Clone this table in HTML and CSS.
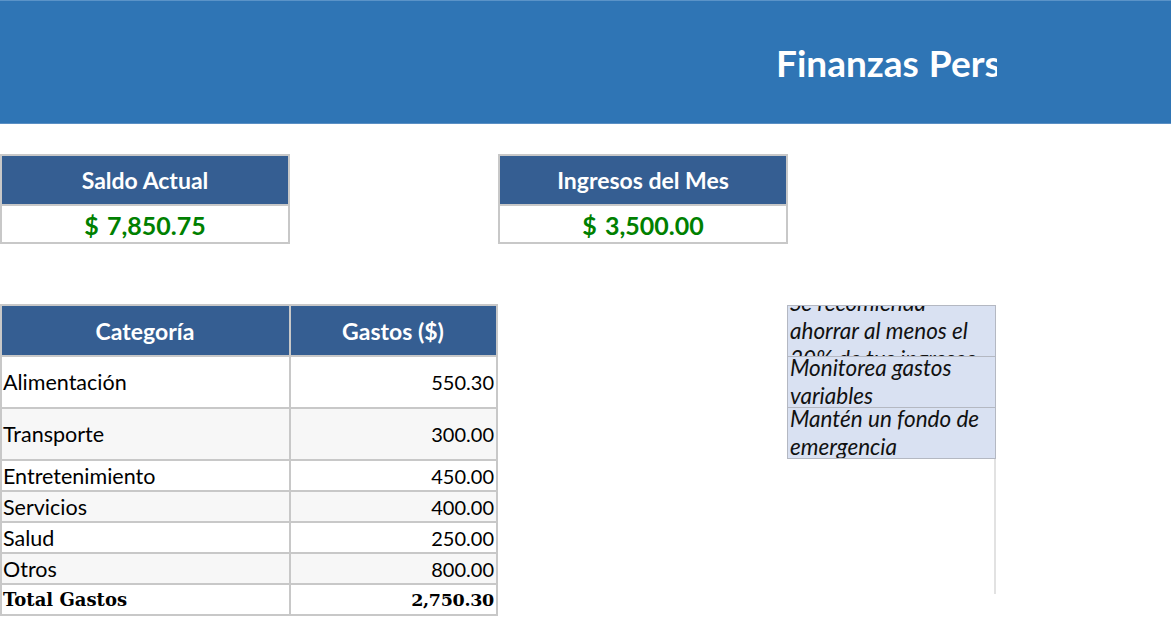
FILE: index.html
```html
<!DOCTYPE html>
<html lang="es">
<head>
<meta charset="utf-8">
<title>Finanzas Personales</title>
<link rel="stylesheet" href="styles.css">
</head>
<body>
<header class="banner">
  <div class="title-cell"><h1 class="title">Finanzas Personales</h1></div>
</header>

<section class="kpis">
  <div class="kpi">
    <div class="kpi-head">Saldo Actual</div>
    <div class="kpi-value">$ 7,850.75</div>
  </div>
  <div class="kpi">
    <div class="kpi-head">Ingresos del Mes</div>
    <div class="kpi-value">$ 3,500.00</div>
  </div>
</section>

<section class="lower">
  <table class="expenses">
    <thead>
      <tr><th class="col-cat">Categoría</th><th class="col-amt">Gastos ($)</th></tr>
    </thead>
    <tbody>
      <tr class="tall"><td>Alimentación</td><td class="num">550.30</td></tr>
      <tr class="tall alt"><td>Transporte</td><td class="num">300.00</td></tr>
      <tr><td>Entretenimiento</td><td class="num">450.00</td></tr>
      <tr class="alt"><td>Servicios</td><td class="num">400.00</td></tr>
      <tr><td>Salud</td><td class="num">250.00</td></tr>
      <tr class="alt"><td>Otros</td><td class="num">800.00</td></tr>
      <tr class="total"><td>Total Gastos</td><td class="num">2,750.30</td></tr>
    </tbody>
  </table>

  <div class="tips-col">
    <div class="tips">
      <div class="tip"><span>Se recomienda ahorrar al menos el 20% de tus ingresos</span></div>
      <div class="tip"><span>Monitorea gastos variables</span></div>
      <div class="tip"><span>Mantén un fondo de emergencia</span></div>
    </div>
    <div class="tips-rest"></div>
  </div>
</section>
</body>
</html>
```

FILE: styles.css
```css
* { box-sizing: border-box; }

html, body {
  margin: 0;
  padding: 0;
  background: #ffffff;
  width: 1171px;
  height: 617px;
  overflow: hidden;
  font-family: Lato, "Open Sans", sans-serif;
  color: #000;
}

.banner {
  height: 124px;
  background: #2f75b5;
  border-top: 1px solid #5a93c8;
  border-bottom: 1px solid #5a8fc4;
}

.title-cell {
  width: 997px;
  height: 100%;
  overflow: hidden;
  padding-left: 776px;
  display: flex;
  align-items: center;
}

.title {
  margin: 0;
  white-space: nowrap;
  color: #ffffff;
  font-weight: 700;
  font-size: 37px;
  word-spacing: 1px;
  line-height: 1;
}

.kpis {
  display: flex;
  gap: 208px;
  margin-top: 30px;
}

.kpi {
  width: 290px;
  border: 2px solid #c8c8c8;
}

.kpi-head {
  height: 50px;
  background: #355e92;
  color: #fff;
  font-weight: 700;
  font-size: 23px;
  display: flex;
  align-items: center;
  justify-content: center;
  border-bottom: 2px solid #c8c8c8;
}

.kpi-value {
  height: 36px;
  padding-top: 2px;
  color: #008000;
  font-weight: 700;
  font-size: 25px;
  word-spacing: 2px;
  display: flex;
  align-items: center;
  justify-content: center;
}

.lower {
  display: flex;
  align-items: flex-start;
  gap: 289px;
  margin-top: 60px;
}

.expenses {
  border-collapse: collapse;
  width: 498px;
  font-size: 21.5px;
}

.expenses th,
.expenses td {
  border: 2px solid #c8c8c8;
  padding: 0 2px 0 1px;
  height: 31px;
  line-height: 24px;
}

.expenses th {
  height: 51px;
  background: #355e92;
  color: #fff;
  font-weight: 700;
  font-size: 23px;
  text-align: center;
}

.col-cat { width: 290px; }
.col-amt { width: 208px; }

.expenses tr.tall td { height: 52px; }
.expenses tr.alt td { background: #f7f7f7; }

.expenses td.num {
  text-align: right;
  font-size: 20px;
}

.expenses tr.total td {
  font-family: "DejaVu Serif", "Liberation Serif", serif;
  font-weight: 700;
  font-size: 18px;
}

.expenses tr.total td.num {
  font-size: 17.5px;
  letter-spacing: -0.3px;
}

.tips-col {
  width: 209px;
  margin-top: 1px;
  display: flex;
  flex-direction: column;
}

.tip {
  height: 52px;
  background: #d9e1f2;
  border: 1px solid #b4b8c2;
  margin-top: -1px;
  overflow: hidden;
  display: flex;
  align-items: center;
  padding: 0 2px;
  font-style: italic;
  font-size: 22.5px;
  line-height: 28px;
  color: #111;
}

.tip:first-child { height: 52px; margin-top: 0; }

.tips-rest {
  height: 135px;
  border-right: 2px solid #e2e2e2;
}
```
